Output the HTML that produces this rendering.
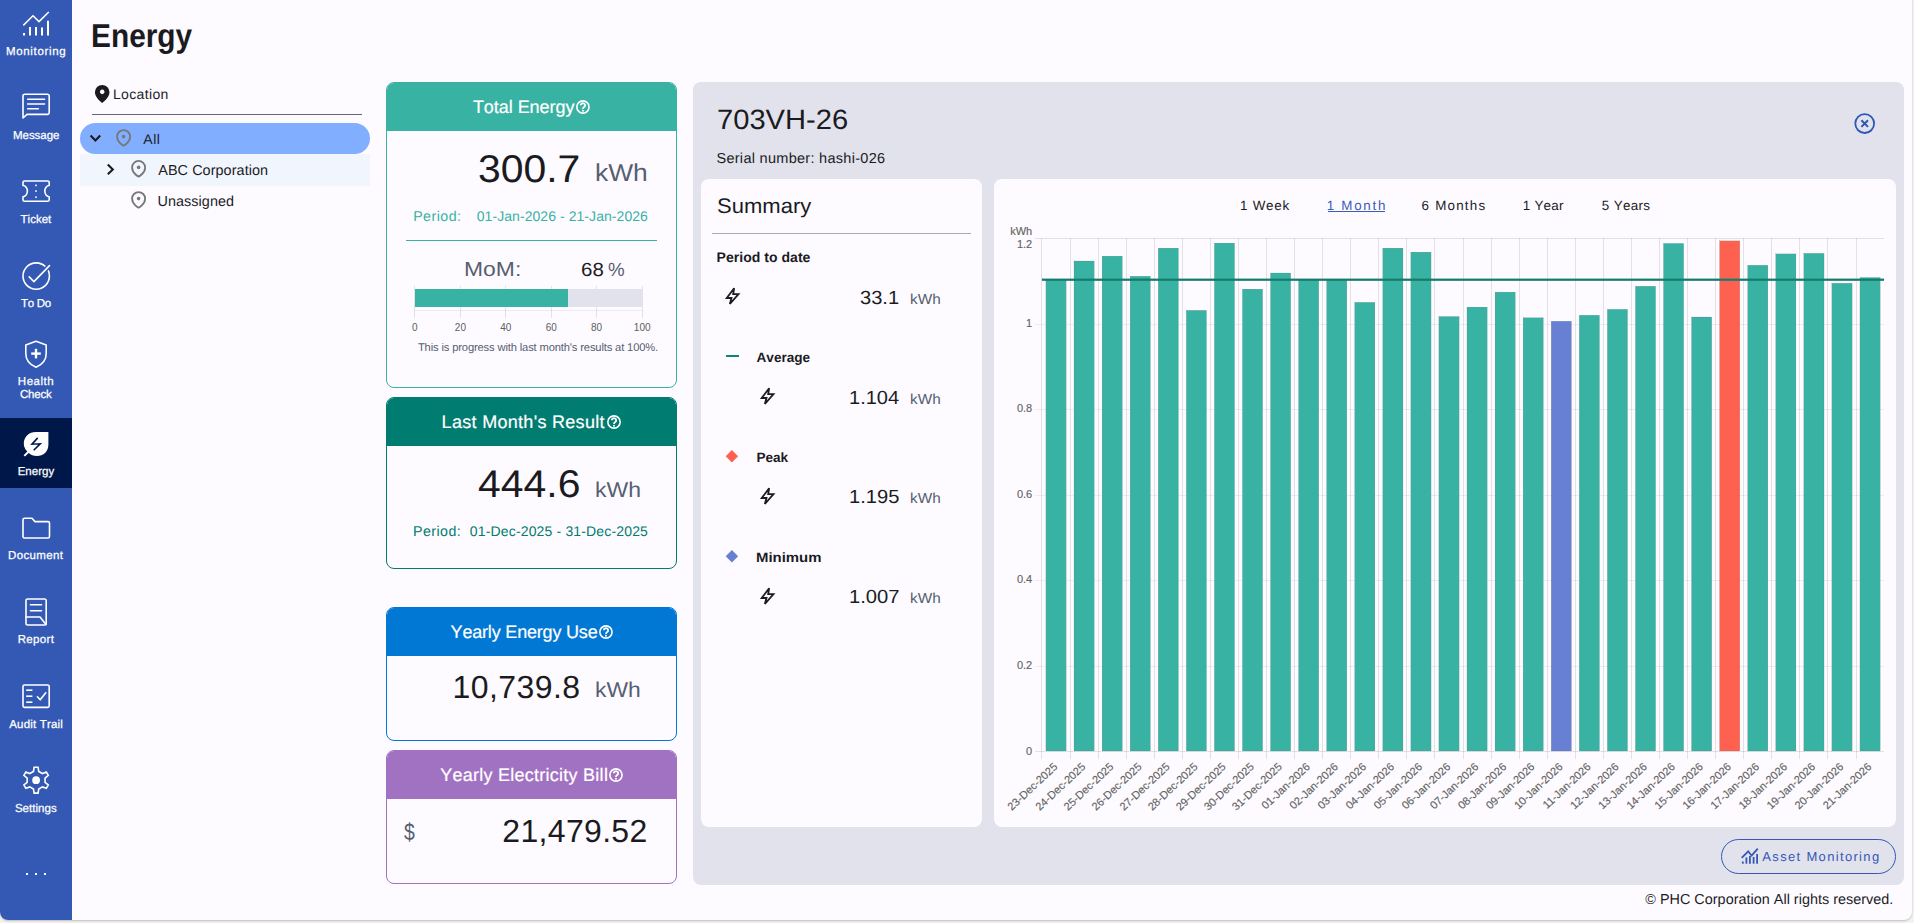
<!DOCTYPE html>
<html><head><meta charset="utf-8"><title>Energy</title>
<style>
html,body{margin:0;padding:0;}
body{width:1914px;height:923px;overflow:hidden;background:#F3F3F3;font-family:"Liberation Sans",sans-serif;position:relative;}
.t{position:absolute;white-space:nowrap;line-height:0;font-family:"Liberation Sans",sans-serif;font-kerning:none;font-variant-ligatures:none;text-rendering:geometricPrecision;}
svg{overflow:visible;display:block}
</style></head><body>
<div id="win" style="position:absolute;left:0;top:0;width:1912px;height:920px;background:#FDFBFF;border-radius:0 0 8px 8px;box-shadow:0 0.5px 2px rgba(0,0,0,0.22);overflow:hidden">
<div style="position:absolute;left:0;top:0;width:72px;height:920px;background:#3459B4"></div>
<div style="position:absolute;left:0;top:418px;width:72px;height:70px;background:#001849"></div>
<span class="t" style="left:5.96px;top:52.00px;font-size:11.5px;letter-spacing:0.677px;color:#fff;-webkit-text-stroke:0.25px #fff;">Monitoring</span>
<span class="t" style="left:12.96px;top:136.00px;font-size:11.5px;letter-spacing:-0.018px;color:#fff;-webkit-text-stroke:0.25px #fff;">Message</span>
<span class="t" style="left:20.54px;top:220.00px;font-size:11.5px;letter-spacing:0.014px;color:#fff;-webkit-text-stroke:0.25px #fff;">Ticket</span>
<span class="t" style="left:20.94px;top:304.00px;font-size:11.5px;letter-spacing:-0.269px;color:#fff;-webkit-text-stroke:0.25px #fff;">To Do</span>
<span class="t" style="left:17.81px;top:382.00px;font-size:11.5px;letter-spacing:0.540px;color:#fff;-webkit-text-stroke:0.25px #fff;">Health</span>
<span class="t" style="left:19.92px;top:395.00px;font-size:11.5px;letter-spacing:-0.207px;color:#fff;-webkit-text-stroke:0.25px #fff;">Check</span>
<span class="t" style="left:17.66px;top:472.00px;font-size:11.5px;letter-spacing:0.026px;color:#fff;-webkit-text-stroke:0.25px #fff;">Energy</span>
<span class="t" style="left:8.06px;top:556.00px;font-size:11.5px;letter-spacing:0.345px;color:#fff;-webkit-text-stroke:0.25px #fff;">Document</span>
<span class="t" style="left:17.66px;top:640.00px;font-size:11.5px;letter-spacing:0.342px;color:#fff;-webkit-text-stroke:0.25px #fff;">Report</span>
<span class="t" style="left:9.28px;top:725.00px;font-size:11.5px;letter-spacing:0.182px;color:#fff;-webkit-text-stroke:0.25px #fff;">Audit Trail</span>
<span class="t" style="left:14.88px;top:809.00px;font-size:11.5px;letter-spacing:0.041px;color:#fff;-webkit-text-stroke:0.25px #fff;">Settings</span>
<div style="position:absolute;left:26.2px;top:873px;width:2px;height:2px;background:#fff"></div>
<div style="position:absolute;left:35px;top:873px;width:2px;height:2px;background:#fff"></div>
<div style="position:absolute;left:43.7px;top:873px;width:2px;height:2px;background:#fff"></div>
<svg style="position:absolute;left:0;top:0" width="72" height="920" viewBox="0 0 72 920" fill="none" stroke="#fff" stroke-width="1.6" stroke-linecap="round" stroke-linejoin="round">
<g stroke-linecap="butt" stroke-linejoin="miter"><polyline points="23.3,25.4 33,15.8 39,21.6 48.8,12" stroke-width="1.5"/><g stroke-width="2"><line x1="24" y1="33" x2="24" y2="35.6"/><line x1="30" y1="27" x2="30" y2="35.6"/><line x1="36" y1="27" x2="36" y2="35.6"/><line x1="42" y1="27.5" x2="42" y2="35.6"/><line x1="48" y1="20.8" x2="48" y2="35.6"/></g></g>
<path d="M23 118 V96 a1.8 1.8 0 0 1 1.8 -1.8 H47.4 a1.8 1.8 0 0 1 1.8 1.8 V112.6 a1.8 1.8 0 0 1 -1.8 1.8 H27 Z"/><g stroke-width="1.4"><line x1="27.6" y1="99.2" x2="44.6" y2="99.2"/><line x1="27.6" y1="104" x2="44.6" y2="104"/><line x1="27.6" y1="108.7" x2="38.4" y2="108.7"/></g>
<path d="M24.5 181 H47.7 a1.5 1.5 0 0 1 1.5 1.5 V185.5 a4.4 5.6 0 0 0 0 11.2 V199.7 a1.5 1.5 0 0 1 -1.5 1.5 H24.5 a1.5 1.5 0 0 1 -1.5 -1.5 V196.7 a4.4 5.6 0 0 0 0 -11.2 V182.5 a1.5 1.5 0 0 1 1.5 -1.5 Z"/><g fill="#fff" stroke="none"><rect x="35.2" y="184.6" width="1.6" height="1.6"/><rect x="35.2" y="190.3" width="1.6" height="1.6"/><rect x="35.2" y="196.4" width="1.6" height="1.6"/></g>
<circle cx="36.2" cy="276.1" r="13.2"/><polyline points="38,277.4 49.5,265.6" stroke="#3459B4" stroke-width="4.6" stroke-linecap="butt"/><polyline points="29.2,276.9 33.9,281.6 49.5,265.6"/>
<path d="M36 341.2 L46.2 345 V353.5 C46.2 360 42 364.8 36 367.2 C30 364.8 25.8 360 25.8 353.5 V345 Z"/><g stroke-width="2.4" stroke-linecap="butt"><line x1="31.2" y1="353.6" x2="40.8" y2="353.6"/><line x1="36" y1="348.8" x2="36" y2="358.4"/></g>
<g stroke="none" fill="#fff"><path d="M48.4 432 V444.5 C48.4 451.5 43.5 456 36.8 456 C33.6 456 30.8 454.9 28.7 453 L25 456.6 L23.6 455.2 L27.3 451.5 C25 449.3 23.8 446.5 23.8 443.5 C23.8 436.8 29 432 36 432 Z"/></g><polyline points="37.7,437.9 32,444.2 40.2,443.8 33.7,450.2" fill="none" stroke="#001849" stroke-width="1.6" stroke-linejoin="miter" stroke-linecap="butt"/>
<path d="M23 537 V519.8 a1.5 1.5 0 0 1 1.5 -1.5 H32 L35 521.6 H48 a1.5 1.5 0 0 1 1.5 1.5 V536.5 a1.5 1.5 0 0 1 -1.5 1.5 H24.5 a1.5 1.5 0 0 1 -1.5 -1.5 Z"/>
<path d="M27.6 599 H44.6 a1.6 1.6 0 0 1 1.6 1.6 V623.4 a1.6 1.6 0 0 1 -1.6 1.6 H27.6 a1.6 1.6 0 0 1 -1.6 -1.6 V600.6 a1.6 1.6 0 0 1 1.6 -1.6 Z"/><path d="M26 617 H40 L46 624.6"/><g stroke-width="1.4"><line x1="30.4" y1="604.8" x2="41.6" y2="604.8"/><line x1="30.4" y1="610.8" x2="41.6" y2="610.8"/></g>
<rect x="23" y="685" width="26.2" height="22.4" rx="1.6"/><g stroke-linecap="butt"><line x1="26.2" y1="690.2" x2="32.4" y2="690.2"/><line x1="26.2" y1="696.2" x2="32.4" y2="696.2"/><line x1="26.2" y1="702.2" x2="32.4" y2="702.2"/></g><polyline points="37.4,696.8 40.2,699.8 45.8,692.8"/>
<path d="M33.47 771.38 L34.14 767.25 L38.06 767.25 L38.73 771.38 L42.42 773.51 L46.34 772.03 L48.30 775.42 L45.05 778.07 L45.05 782.33 L48.30 784.98 L46.34 788.37 L42.42 786.89 L38.73 789.02 L38.06 793.15 L34.14 793.15 L33.47 789.02 L29.78 786.89 L25.86 788.37 L23.90 784.98 L27.15 782.33 L27.15 778.07 L23.90 775.42 L25.86 772.03 L29.78 773.51 Z" stroke-width="1.6" stroke-linejoin="miter"/><circle cx="36.1" cy="780.2" r="3.9" fill="#fff" stroke="none"/>
</svg>
<span class="t" style="left:91.00px;top:36.00px;font-size:33px;letter-spacing:0.000px;color:#1B1B1F;font-weight:700;transform:scaleX(0.9042);transform-origin:0 0;">Energy</span>
<svg style="position:absolute;left:94px;top:84px" width="17" height="20" viewBox="94 84 17 20"><path d="M102.2 103 C102.2 103 94.9 97.6 94.9 92.2 A7.3 7.3 0 0 1 109.5 92.2 C109.5 97.6 102.2 103 102.2 103 Z M102.2 89.6 a2.3 2.3 0 1 0 0.001 0 Z" fill="#1B1B1F" fill-rule="evenodd"/></svg>
<span class="t" style="left:112.95px;top:94.00px;font-size:14px;letter-spacing:0.347px;color:#1B1B1F;">Location</span>
<div style="position:absolute;left:92px;top:114px;width:270px;height:1px;background:#66666b"></div>
<div style="position:absolute;left:80px;top:123px;width:290px;height:31px;background:#82AEFF;border-radius:15.5px"></div>
<div style="position:absolute;left:80px;top:154px;width:290px;height:32px;background:#F1F5FD"></div>
<span class="t" style="left:143.37px;top:139.00px;font-size:14px;letter-spacing:0.503px;color:#1B1B1F;">All</span>
<span class="t" style="left:158.27px;top:171.00px;font-size:14.4px;letter-spacing:0.072px;color:#1B1B1F;">ABC Corporation</span>
<span class="t" style="left:157.49px;top:202.00px;font-size:14.4px;letter-spacing:0.065px;color:#1B1B1F;">Unassigned</span>
<svg style="position:absolute;left:80px;top:120px" width="100" height="100" viewBox="80 120 100 100" fill="none"><polyline points="90.6,135.6 95.4,140.6 100.2,135.6" stroke="#1B1B1F" stroke-width="2.1"/><polyline points="107.8,164.6 112.8,169.4 107.8,174.2" stroke="#1B1B1F" stroke-width="2.1"/>
<path d="M123.6 145.79999999999998 C123.6 145.79999999999998 117.1 142.6 117.1 136.6 A6.5 6.5 0 0 1 130.1 136.6 C130.1 142.6 123.6 145.79999999999998 123.6 145.79999999999998 Z" stroke="#77777A" stroke-width="1.8"/><circle cx="123.6" cy="136.6" r="1.8" fill="#77777A"/>
<path d="M138.6 176.6 C138.6 176.6 132.1 173.4 132.1 167.4 A6.5 6.5 0 0 1 145.1 167.4 C145.1 173.4 138.6 176.6 138.6 176.6 Z" stroke="#77777A" stroke-width="1.8"/><circle cx="138.6" cy="167.4" r="1.8" fill="#77777A"/>
<path d="M138.6 207.79999999999998 C138.6 207.79999999999998 132.1 204.6 132.1 198.6 A6.5 6.5 0 0 1 145.1 198.6 C145.1 204.6 138.6 207.79999999999998 138.6 207.79999999999998 Z" stroke="#77777A" stroke-width="1.8"/><circle cx="138.6" cy="198.6" r="1.8" fill="#77777A"/>
</svg>
<div style="position:absolute;left:386px;top:82px;width:291px;height:306px;box-sizing:border-box;border:1px solid #38B2A3;border-radius:8px;background:#FDFBFF;overflow:hidden"><div style="height:48px;background:#38B2A3"></div></div>
<span class="t" style="left:472.90px;top:107.00px;font-size:18px;letter-spacing:-0.046px;color:#fff;-webkit-text-stroke:0.2px #fff;">Total Energy</span>
<svg style="position:absolute;left:574.9px;top:98.9px" width="16" height="16" viewBox="574.9 98.9 16 16"><circle cx="582.83" cy="106.90" r="6.12" fill="none" stroke="#fff" stroke-width="1.6"/><path d="M580.62 105.20 a2.2 2.1 0 1 1 3.4 1.8 c-0.9 0.55 -1.2 0.9 -1.2 1.8" fill="none" stroke="#fff" stroke-width="1.8"/><circle cx="582.83" cy="110.60" r="1" fill="#fff"/></svg>
<span class="t" style="left:478.04px;top:170.00px;font-size:38.6px;letter-spacing:0.000px;color:#1B1B1F;transform:scaleX(1.0603);transform-origin:0 0;">300.7</span>
<span class="t" style="left:595.42px;top:174.00px;font-size:24.5px;letter-spacing:0.000px;color:#575E71;transform:scaleX(1.0774);transform-origin:0 0;">kWh</span>
<span class="t" style="left:413.14px;top:217.00px;font-size:14.2px;letter-spacing:0.478px;color:#38B2A3;">Period:</span>
<span class="t" style="left:476.75px;top:216.00px;font-size:14px;letter-spacing:0.062px;color:#38B2A3;">01-Jan-2026 - 21-Jan-2026</span>
<div style="position:absolute;left:406px;top:240px;width:251px;height:1px;background:#38B2A3"></div>
<span class="t" style="left:463.92px;top:270.00px;font-size:20.5px;letter-spacing:0.000px;color:#575E71;transform:scaleX(1.1175);transform-origin:0 0;">MoM:</span>
<span class="t" style="left:581.26px;top:271.00px;font-size:19px;letter-spacing:0.000px;color:#1B1B1F;transform:scaleX(1.0805);transform-origin:0 0;">68</span>
<span class="t" style="left:607.53px;top:271.00px;font-size:19px;letter-spacing:0.000px;color:#575E71;transform:scaleX(0.9846);transform-origin:0 0;">%</span>
<svg style="position:absolute;left:400px;top:280px" width="270" height="60" viewBox="400 280 270 60" shape-rendering="crispEdges">
<line x1="414.5" y1="286" x2="414.5" y2="318" stroke="rgba(0,0,0,0.1)" stroke-width="1"/>
<line x1="460.5" y1="286" x2="460.5" y2="318" stroke="rgba(0,0,0,0.1)" stroke-width="1"/>
<line x1="505.5" y1="286" x2="505.5" y2="318" stroke="rgba(0,0,0,0.1)" stroke-width="1"/>
<line x1="551.5" y1="286" x2="551.5" y2="318" stroke="rgba(0,0,0,0.1)" stroke-width="1"/>
<line x1="596.5" y1="286" x2="596.5" y2="318" stroke="rgba(0,0,0,0.1)" stroke-width="1"/>
<line x1="642.5" y1="286" x2="642.5" y2="318" stroke="rgba(0,0,0,0.1)" stroke-width="1"/>
<line x1="414" y1="310.5" x2="643" y2="310.5" stroke="rgba(0,0,0,0.06)" stroke-width="1"/>
<rect x="415" y="289" width="227.5" height="18" fill="#E1E2EC"/><rect x="415" y="289" width="153" height="18" fill="#38B2A3"/>
</svg>
<svg style="position:absolute;left:400px;top:318px" width="270" height="20" viewBox="400 318 270 20" font-family="Liberation Sans, sans-serif" font-size="10" fill="#5e5e5e" text-anchor="middle">
<text x="414.7" y="330.7">0</text>
<text x="460.4" y="330.7">20</text>
<text x="505.8" y="330.7">40</text>
<text x="551.2" y="330.7">60</text>
<text x="596.5" y="330.7">80</text>
<text x="642.2" y="330.7">100</text>
</svg>
<span class="t" style="left:417.95px;top:348.00px;font-size:11.2px;letter-spacing:-0.149px;color:#575E71;">This is progress with last month's results at 100%.</span>
<div style="position:absolute;left:386px;top:397px;width:291px;height:172px;box-sizing:border-box;border:1px solid #007C70;border-radius:8px;background:#FDFBFF;overflow:hidden"><div style="height:48px;background:#007C70"></div></div>
<span class="t" style="left:441.62px;top:422.00px;font-size:18px;letter-spacing:0.300px;color:#fff;-webkit-text-stroke:0.2px #fff;">Last Month's Result</span>
<svg style="position:absolute;left:605.5px;top:414.2px" width="16" height="16" viewBox="605.5 414.2 16 16"><circle cx="613.50" cy="422.20" r="6.15" fill="none" stroke="#fff" stroke-width="1.6"/><path d="M611.30 420.50 a2.2 2.1 0 1 1 3.4 1.8 c-0.9 0.55 -1.2 0.9 -1.2 1.8" fill="none" stroke="#fff" stroke-width="1.8"/><circle cx="613.50" cy="425.90" r="1" fill="#fff"/></svg>
<span class="t" style="left:478.06px;top:485.00px;font-size:38.6px;letter-spacing:0.000px;color:#1B1B1F;transform:scaleX(1.0605);transform-origin:0 0;">444.6</span>
<span class="t" style="left:595.05px;top:490.00px;font-size:21.5px;letter-spacing:0.000px;color:#575E71;transform:scaleX(1.0684);transform-origin:0 0;">kWh</span>
<span class="t" style="left:413.04px;top:532.00px;font-size:14.2px;letter-spacing:0.462px;color:#007C70;">Period:</span>
<span class="t" style="left:469.85px;top:531.00px;font-size:14px;letter-spacing:0.155px;color:#007C70;">01-Dec-2025 - 31-Dec-2025</span>
<div style="position:absolute;left:386px;top:607px;width:291px;height:134px;box-sizing:border-box;border:1px solid #0078D4;border-radius:8px;background:#FDFBFF;overflow:hidden"><div style="height:48px;background:#0078D4"></div></div>
<span class="t" style="left:450.60px;top:632.00px;font-size:18px;letter-spacing:-0.186px;color:#fff;-webkit-text-stroke:0.2px #fff;">Yearly Energy Use</span>
<svg style="position:absolute;left:597.9px;top:623.8px" width="16" height="16" viewBox="597.9 623.8 16 16"><circle cx="605.85" cy="631.80" r="6.10" fill="none" stroke="#fff" stroke-width="1.6"/><path d="M603.65 630.10 a2.2 2.1 0 1 1 3.4 1.8 c-0.9 0.55 -1.2 0.9 -1.2 1.8" fill="none" stroke="#fff" stroke-width="1.8"/><circle cx="605.85" cy="635.50" r="1" fill="#fff"/></svg>
<span class="t" style="left:452.56px;top:687.00px;font-size:32px;letter-spacing:0.424px;color:#1B1B1F;">10,739.8</span>
<span class="t" style="left:595.36px;top:690.00px;font-size:21.5px;letter-spacing:0.000px;color:#575E71;transform:scaleX(1.0634);transform-origin:0 0;">kWh</span>
<div style="position:absolute;left:386px;top:750px;width:291px;height:134px;box-sizing:border-box;border:1px solid #A272C2;border-radius:8px;background:#FDFBFF;overflow:hidden"><div style="height:48px;background:#A272C2"></div></div>
<span class="t" style="left:440.20px;top:775.00px;font-size:18px;letter-spacing:0.257px;color:#fff;-webkit-text-stroke:0.2px #fff;">Yearly Electricity Bill</span>
<svg style="position:absolute;left:607.6px;top:766.8px" width="16" height="16" viewBox="607.6 766.8 16 16"><circle cx="615.55" cy="774.80" r="6.10" fill="none" stroke="#fff" stroke-width="1.6"/><path d="M613.35 773.10 a2.2 2.1 0 1 1 3.4 1.8 c-0.9 0.55 -1.2 0.9 -1.2 1.8" fill="none" stroke="#fff" stroke-width="1.8"/><circle cx="615.55" cy="778.50" r="1" fill="#fff"/></svg>
<span class="t" style="left:404.09px;top:833.00px;font-size:24px;letter-spacing:0.000px;color:#575E71;transform:scaleX(0.8108);transform-origin:0 0;">$</span>
<span class="t" style="left:502.29px;top:831.00px;font-size:32px;letter-spacing:0.332px;color:#1B1B1F;">21,479.52</span>
<div style="position:absolute;left:693px;top:82px;width:1211px;height:803px;background:#E1E2EC;border-radius:8px"></div>
<span class="t" style="left:716.71px;top:120.00px;font-size:28px;letter-spacing:0.000px;color:#1B1B1F;transform:scaleX(1.0396);transform-origin:0 0;">703VH-26</span>
<span class="t" style="left:716.44px;top:159.00px;font-size:14.5px;letter-spacing:0.291px;color:#1B1B1F;">Serial number: hashi-026</span>
<svg style="position:absolute;left:1852px;top:111px" width="25" height="25" viewBox="1852 111 25 25" fill="none" stroke="#2F56B5" stroke-width="1.8"><circle cx="1864.7" cy="123.6" r="9.4"/><path d="M1861.4 120.3 L1868 126.9 M1868 120.3 L1861.4 126.9" stroke-width="2"/></svg>
<div style="position:absolute;left:701px;top:179px;width:281px;height:648px;background:#FDFBFF;border-radius:8px"></div>
<div style="position:absolute;left:994px;top:179px;width:902px;height:648px;background:#FDFBFF;border-radius:8px"></div>
<span class="t" style="left:716.50px;top:207.00px;font-size:21px;letter-spacing:0.000px;color:#1B1B1F;transform:scaleX(1.0490);transform-origin:0 0;">Summary</span>
<div style="position:absolute;left:712px;top:233px;width:259px;height:1px;background:#A9A9AE"></div>
<span class="t" style="left:716.56px;top:257.00px;font-size:14px;letter-spacing:0.036px;color:#1B1B1F;font-weight:700;">Period to date</span>
<svg style="position:absolute;left:724.6px;top:287.1px" width="15" height="18" viewBox="0 0 14.6 17.8"><path d="M8.9 1.2 L1.6 10.9 H6.3 L4.7 16.8 L13.2 7.1 H8 Z" fill="none" stroke="#1B1B1F" stroke-width="1.8" stroke-linejoin="miter"/></svg>
<span class="t" style="left:859.83px;top:299.00px;font-size:19px;letter-spacing:0.000px;color:#1B1B1F;transform:scaleX(1.0586);transform-origin:0 0;">33.1</span>
<span class="t" style="left:910.26px;top:300.00px;font-size:14.4px;letter-spacing:0.000px;color:#575E71;transform:scaleX(1.0671);transform-origin:0 0;">kWh</span>
<span class="t" style="left:756.56px;top:358.00px;font-size:13.6px;letter-spacing:-0.012px;color:#1B1B1F;font-weight:700;">Average</span>
<svg style="position:absolute;left:760px;top:387.0px" width="15" height="18" viewBox="0 0 14.6 17.8"><path d="M8.9 1.2 L1.6 10.9 H6.3 L4.7 16.8 L13.2 7.1 H8 Z" fill="none" stroke="#1B1B1F" stroke-width="1.8" stroke-linejoin="miter"/></svg>
<span class="t" style="left:848.77px;top:399.00px;font-size:19px;letter-spacing:0.000px;color:#1B1B1F;transform:scaleX(1.0540);transform-origin:0 0;">1.104</span>
<span class="t" style="left:910.26px;top:400.00px;font-size:14.4px;letter-spacing:0.000px;color:#575E71;transform:scaleX(1.0671);transform-origin:0 0;">kWh</span>
<span class="t" style="left:756.39px;top:458.00px;font-size:13.6px;letter-spacing:-0.022px;color:#1B1B1F;font-weight:700;">Peak</span>
<svg style="position:absolute;left:760px;top:486.8px" width="15" height="18" viewBox="0 0 14.6 17.8"><path d="M8.9 1.2 L1.6 10.9 H6.3 L4.7 16.8 L13.2 7.1 H8 Z" fill="none" stroke="#1B1B1F" stroke-width="1.8" stroke-linejoin="miter"/></svg>
<span class="t" style="left:848.77px;top:498.00px;font-size:19px;letter-spacing:0.000px;color:#1B1B1F;transform:scaleX(1.0596);transform-origin:0 0;">1.195</span>
<span class="t" style="left:910.26px;top:499.00px;font-size:14.4px;letter-spacing:0.000px;color:#575E71;transform:scaleX(1.0671);transform-origin:0 0;">kWh</span>
<span class="t" style="left:756.30px;top:558.00px;font-size:13.6px;letter-spacing:0.000px;color:#1B1B1F;font-weight:700;transform:scaleX(1.0978);transform-origin:0 0;">Minimum</span>
<svg style="position:absolute;left:760px;top:586.8000000000001px" width="15" height="18" viewBox="0 0 14.6 17.8"><path d="M8.9 1.2 L1.6 10.9 H6.3 L4.7 16.8 L13.2 7.1 H8 Z" fill="none" stroke="#1B1B1F" stroke-width="1.8" stroke-linejoin="miter"/></svg>
<span class="t" style="left:848.76px;top:598.00px;font-size:19px;letter-spacing:0.000px;color:#1B1B1F;transform:scaleX(1.0633);transform-origin:0 0;">1.007</span>
<span class="t" style="left:910.26px;top:599.00px;font-size:14.4px;letter-spacing:0.000px;color:#575E71;transform:scaleX(1.0671);transform-origin:0 0;">kWh</span>
<div style="position:absolute;left:725.5px;top:355px;width:13px;height:2px;background:#0E8778"></div>
<svg style="position:absolute;left:724px;top:449px" width="16" height="116" viewBox="724 449 16 116"><path d="M731.9 450.1 L738.1 456.3 L731.9 462.5 L725.7 456.3 Z" fill="#FF6150"/><path d="M731.9 550.1 L738.1 556.3 L731.9 562.5 L725.7 556.3 Z" fill="#6780D4"/></svg>
<span class="t" style="left:1239.98px;top:206.00px;font-size:13.4px;letter-spacing:0.775px;color:#1B1B1F;">1 Week</span>
<span class="t" style="left:1326.68px;top:206.00px;font-size:13.4px;letter-spacing:1.712px;color:#3B5CB8;">1 Month</span>
<div style="position:absolute;left:1327.5px;top:211.3px;width:57.2px;height:1px;background:#3B5CB8"></div>
<span class="t" style="left:1421.52px;top:206.00px;font-size:13.4px;letter-spacing:1.221px;color:#1B1B1F;">6 Months</span>
<span class="t" style="left:1522.78px;top:206.00px;font-size:13.4px;letter-spacing:0.253px;color:#1B1B1F;">1 Year</span>
<span class="t" style="left:1601.86px;top:206.00px;font-size:13.4px;letter-spacing:0.323px;color:#1B1B1F;">5 Years</span>
<svg style="position:absolute;left:994px;top:179px" width="902" height="648" viewBox="994 179 902 648" font-family="Liberation Sans, sans-serif" font-size="11" fill="#636363" stroke="#666" stroke-width="0.15">
<g shape-rendering="crispEdges" stroke-width="1">
<line x1="1041.5" y1="238" x2="1041.5" y2="759" stroke="rgba(0,0,0,0.1)"/>
<line x1="1070.5" y1="238" x2="1070.5" y2="759" stroke="rgba(0,0,0,0.1)"/>
<line x1="1098.5" y1="238" x2="1098.5" y2="759" stroke="rgba(0,0,0,0.1)"/>
<line x1="1126.5" y1="238" x2="1126.5" y2="759" stroke="rgba(0,0,0,0.1)"/>
<line x1="1154.5" y1="238" x2="1154.5" y2="759" stroke="rgba(0,0,0,0.1)"/>
<line x1="1182.5" y1="238" x2="1182.5" y2="759" stroke="rgba(0,0,0,0.1)"/>
<line x1="1210.5" y1="238" x2="1210.5" y2="759" stroke="rgba(0,0,0,0.1)"/>
<line x1="1238.5" y1="238" x2="1238.5" y2="759" stroke="rgba(0,0,0,0.1)"/>
<line x1="1266.5" y1="238" x2="1266.5" y2="759" stroke="rgba(0,0,0,0.1)"/>
<line x1="1294.5" y1="238" x2="1294.5" y2="759" stroke="rgba(0,0,0,0.1)"/>
<line x1="1322.5" y1="238" x2="1322.5" y2="759" stroke="rgba(0,0,0,0.1)"/>
<line x1="1350.5" y1="238" x2="1350.5" y2="759" stroke="rgba(0,0,0,0.1)"/>
<line x1="1378.5" y1="238" x2="1378.5" y2="759" stroke="rgba(0,0,0,0.1)"/>
<line x1="1406.5" y1="238" x2="1406.5" y2="759" stroke="rgba(0,0,0,0.1)"/>
<line x1="1434.5" y1="238" x2="1434.5" y2="759" stroke="rgba(0,0,0,0.1)"/>
<line x1="1463.5" y1="238" x2="1463.5" y2="759" stroke="rgba(0,0,0,0.1)"/>
<line x1="1491.5" y1="238" x2="1491.5" y2="759" stroke="rgba(0,0,0,0.1)"/>
<line x1="1519.5" y1="238" x2="1519.5" y2="759" stroke="rgba(0,0,0,0.1)"/>
<line x1="1547.5" y1="238" x2="1547.5" y2="759" stroke="rgba(0,0,0,0.1)"/>
<line x1="1575.5" y1="238" x2="1575.5" y2="759" stroke="rgba(0,0,0,0.1)"/>
<line x1="1603.5" y1="238" x2="1603.5" y2="759" stroke="rgba(0,0,0,0.1)"/>
<line x1="1631.5" y1="238" x2="1631.5" y2="759" stroke="rgba(0,0,0,0.1)"/>
<line x1="1659.5" y1="238" x2="1659.5" y2="759" stroke="rgba(0,0,0,0.1)"/>
<line x1="1687.5" y1="238" x2="1687.5" y2="759" stroke="rgba(0,0,0,0.1)"/>
<line x1="1715.5" y1="238" x2="1715.5" y2="759" stroke="rgba(0,0,0,0.1)"/>
<line x1="1743.5" y1="238" x2="1743.5" y2="759" stroke="rgba(0,0,0,0.1)"/>
<line x1="1771.5" y1="238" x2="1771.5" y2="759" stroke="rgba(0,0,0,0.1)"/>
<line x1="1799.5" y1="238" x2="1799.5" y2="759" stroke="rgba(0,0,0,0.1)"/>
<line x1="1827.5" y1="238" x2="1827.5" y2="759" stroke="rgba(0,0,0,0.1)"/>
<line x1="1856.5" y1="238" x2="1856.5" y2="759" stroke="rgba(0,0,0,0.1)"/>
<line x1="1035" y1="751.5" x2="1884" y2="751.5" stroke="rgba(0,0,0,0.1)"/>
<line x1="1035" y1="666.5" x2="1884" y2="666.5" stroke="rgba(0,0,0,0.06)"/>
<line x1="1035" y1="580.5" x2="1884" y2="580.5" stroke="rgba(0,0,0,0.06)"/>
<line x1="1035" y1="495.5" x2="1884" y2="495.5" stroke="rgba(0,0,0,0.06)"/>
<line x1="1035" y1="409.5" x2="1884" y2="409.5" stroke="rgba(0,0,0,0.06)"/>
<line x1="1035" y1="324.5" x2="1884" y2="324.5" stroke="rgba(0,0,0,0.06)"/>
<line x1="1035" y1="238.5" x2="1884" y2="238.5" stroke="rgba(0,0,0,0.1)"/>
</g>
<rect x="1045.93" y="279.5" width="20.21" height="471.5" fill="#38B2A3"/>
<rect x="1074.00" y="261.0" width="20.21" height="490.0" fill="#38B2A3"/>
<rect x="1102.07" y="256.1" width="20.21" height="494.9" fill="#38B2A3"/>
<rect x="1130.14" y="276.2" width="20.21" height="474.8" fill="#38B2A3"/>
<rect x="1158.21" y="248.1" width="20.21" height="502.9" fill="#38B2A3"/>
<rect x="1186.28" y="310.3" width="20.21" height="440.7" fill="#38B2A3"/>
<rect x="1214.35" y="243.1" width="20.21" height="507.9" fill="#38B2A3"/>
<rect x="1242.42" y="289.1" width="20.21" height="461.9" fill="#38B2A3"/>
<rect x="1270.49" y="273.0" width="20.21" height="478.0" fill="#38B2A3"/>
<rect x="1298.56" y="280.0" width="20.21" height="471.0" fill="#38B2A3"/>
<rect x="1326.63" y="280.0" width="20.21" height="471.0" fill="#38B2A3"/>
<rect x="1354.70" y="302.3" width="20.21" height="448.7" fill="#38B2A3"/>
<rect x="1382.77" y="248.1" width="20.21" height="502.9" fill="#38B2A3"/>
<rect x="1410.84" y="252.1" width="20.21" height="498.9" fill="#38B2A3"/>
<rect x="1438.91" y="316.5" width="20.21" height="434.5" fill="#38B2A3"/>
<rect x="1466.98" y="307.1" width="20.21" height="443.9" fill="#38B2A3"/>
<rect x="1495.05" y="292.1" width="20.21" height="458.9" fill="#38B2A3"/>
<rect x="1523.12" y="317.7" width="20.21" height="433.3" fill="#38B2A3"/>
<rect x="1551.19" y="321.2" width="20.21" height="429.8" fill="#6780D4"/>
<rect x="1579.26" y="315.2" width="20.21" height="435.8" fill="#38B2A3"/>
<rect x="1607.33" y="309.3" width="20.21" height="441.7" fill="#38B2A3"/>
<rect x="1635.40" y="286.2" width="20.21" height="464.8" fill="#38B2A3"/>
<rect x="1663.47" y="243.4" width="20.21" height="507.6" fill="#38B2A3"/>
<rect x="1691.54" y="317.0" width="20.21" height="434.0" fill="#38B2A3"/>
<rect x="1719.61" y="240.9" width="20.21" height="510.1" fill="#FF6150"/>
<rect x="1747.68" y="265.2" width="20.21" height="485.8" fill="#38B2A3"/>
<rect x="1775.75" y="253.9" width="20.21" height="497.1" fill="#38B2A3"/>
<rect x="1803.82" y="253.3" width="20.21" height="497.7" fill="#38B2A3"/>
<rect x="1831.89" y="283.2" width="20.21" height="467.8" fill="#38B2A3"/>
<rect x="1859.96" y="277.5" width="20.21" height="473.5" fill="#38B2A3"/>
<rect x="1042" y="278.7" width="842" height="2.1" fill="#08816F"/>
<g text-anchor="end">
<text x="1032.2" y="234.9">kWh</text>
<text x="1032.2" y="755.0">0</text>
<text x="1032.2" y="668.7">0.2</text>
<text x="1032.2" y="583.2">0.4</text>
<text x="1032.2" y="497.7">0.6</text>
<text x="1032.2" y="412.2">0.8</text>
<text x="1032.2" y="326.7">1</text>
<text x="1032.2" y="247.9">1.2</text>
</g>
<g text-anchor="end">
<text transform="translate(1051.04,760.0) rotate(-43.2)" x="0" y="10.4">23-Dec-2025</text>
<text transform="translate(1079.11,760.0) rotate(-43.2)" x="0" y="10.4">24-Dec-2025</text>
<text transform="translate(1107.17,760.0) rotate(-43.2)" x="0" y="10.4">25-Dec-2025</text>
<text transform="translate(1135.24,760.0) rotate(-43.2)" x="0" y="10.4">26-Dec-2025</text>
<text transform="translate(1163.32,760.0) rotate(-43.2)" x="0" y="10.4">27-Dec-2025</text>
<text transform="translate(1191.38,760.0) rotate(-43.2)" x="0" y="10.4">28-Dec-2025</text>
<text transform="translate(1219.45,760.0) rotate(-43.2)" x="0" y="10.4">29-Dec-2025</text>
<text transform="translate(1247.53,760.0) rotate(-43.2)" x="0" y="10.4">30-Dec-2025</text>
<text transform="translate(1275.60,760.0) rotate(-43.2)" x="0" y="10.4">31-Dec-2025</text>
<text transform="translate(1303.66,760.0) rotate(-43.2)" x="0" y="10.4">01-Jan-2026</text>
<text transform="translate(1331.73,760.0) rotate(-43.2)" x="0" y="10.4">02-Jan-2026</text>
<text transform="translate(1359.80,760.0) rotate(-43.2)" x="0" y="10.4">03-Jan-2026</text>
<text transform="translate(1387.88,760.0) rotate(-43.2)" x="0" y="10.4">04-Jan-2026</text>
<text transform="translate(1415.94,760.0) rotate(-43.2)" x="0" y="10.4">05-Jan-2026</text>
<text transform="translate(1444.01,760.0) rotate(-43.2)" x="0" y="10.4">06-Jan-2026</text>
<text transform="translate(1472.09,760.0) rotate(-43.2)" x="0" y="10.4">07-Jan-2026</text>
<text transform="translate(1500.15,760.0) rotate(-43.2)" x="0" y="10.4">08-Jan-2026</text>
<text transform="translate(1528.22,760.0) rotate(-43.2)" x="0" y="10.4">09-Jan-2026</text>
<text transform="translate(1556.30,760.0) rotate(-43.2)" x="0" y="10.4">10-Jan-2026</text>
<text transform="translate(1584.36,760.0) rotate(-43.2)" x="0" y="10.4">11-Jan-2026</text>
<text transform="translate(1612.43,760.0) rotate(-43.2)" x="0" y="10.4">12-Jan-2026</text>
<text transform="translate(1640.50,760.0) rotate(-43.2)" x="0" y="10.4">13-Jan-2026</text>
<text transform="translate(1668.57,760.0) rotate(-43.2)" x="0" y="10.4">14-Jan-2026</text>
<text transform="translate(1696.64,760.0) rotate(-43.2)" x="0" y="10.4">15-Jan-2026</text>
<text transform="translate(1724.71,760.0) rotate(-43.2)" x="0" y="10.4">16-Jan-2026</text>
<text transform="translate(1752.78,760.0) rotate(-43.2)" x="0" y="10.4">17-Jan-2026</text>
<text transform="translate(1780.86,760.0) rotate(-43.2)" x="0" y="10.4">18-Jan-2026</text>
<text transform="translate(1808.92,760.0) rotate(-43.2)" x="0" y="10.4">19-Jan-2026</text>
<text transform="translate(1836.99,760.0) rotate(-43.2)" x="0" y="10.4">20-Jan-2026</text>
<text transform="translate(1865.07,760.0) rotate(-43.2)" x="0" y="10.4">21-Jan-2026</text>
</g></svg>
<div style="position:absolute;left:1721px;top:839px;width:175px;height:35px;box-sizing:border-box;border:1.2px solid #3558B5;border-radius:17.5px"></div>
<svg style="position:absolute;left:1740px;top:847px" width="20" height="19" viewBox="1740 847 20 19" fill="none" stroke="#3558B5"><polyline points="1741.7,857.9 1748.2,851.3 1751.6,855.7 1757.8,848.7" stroke-width="1.8"/><g stroke-width="1.8"><line x1="1742.8" y1="861.5" x2="1742.8" y2="863.7"/><line x1="1746.4" y1="857.4" x2="1746.4" y2="863.7"/><line x1="1749.9" y1="856" x2="1749.9" y2="863.7"/><line x1="1753.6" y1="857" x2="1753.6" y2="863.7"/><line x1="1757.1" y1="854" x2="1757.1" y2="863.7"/></g></svg>
<span class="t" style="left:1762.37px;top:857.00px;font-size:13px;letter-spacing:1.329px;color:#3558B5;">Asset Monitoring</span>
<span class="t" style="left:1645.28px;top:900.00px;font-size:14.4px;letter-spacing:0.020px;color:#1B1B1F;">© PHC Corporation All rights reserved.</span>
</div>
</body></html>
